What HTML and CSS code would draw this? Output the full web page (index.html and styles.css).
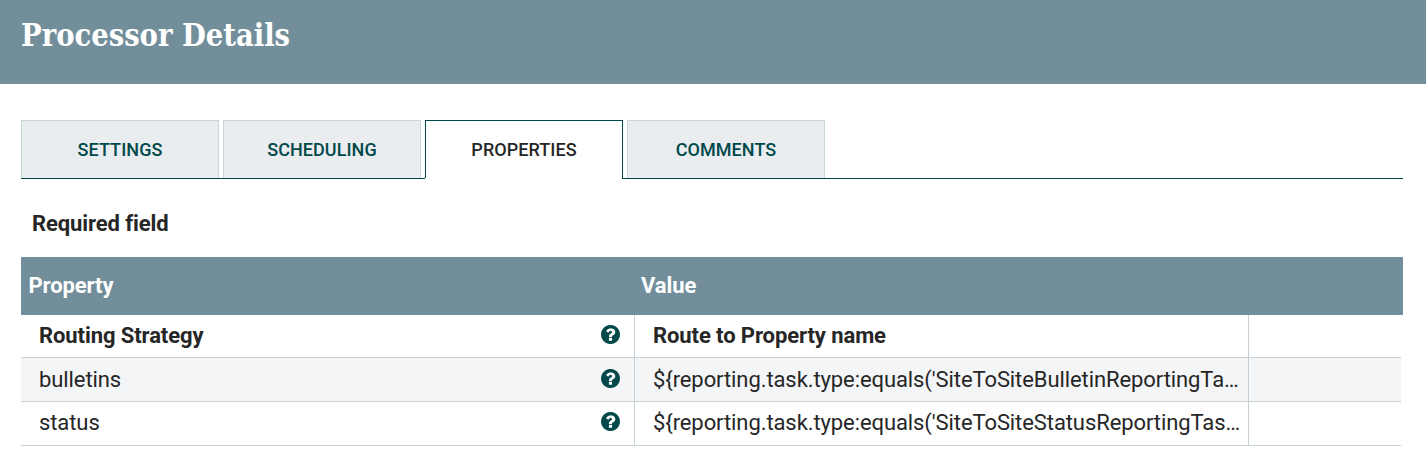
FILE: index.html
```html
<!DOCTYPE html>
<html lang="en">
<head>
<meta charset="utf-8">
<title>Processor Details</title>
<link rel="stylesheet" href="styles.css">
</head>
<body>
<svg width="0" height="0" class="defs" aria-hidden="true">
  <symbol id="help" viewBox="0 0 1536 1536">
    <path d="M896 1248v-192q0-14-9-23t-23-9h-192q-14 0-23 9t-9 23v192q0 14 9 23t23 9h192q14 0 23-9t9-23zm256-672q0-88-55.500-163t-138.500-116-170-41q-243 0-371 213-15 24 8 42l132 100q7 6 19 6 16 0 25-12 53-68 86-92 34-24 86-24 48 0 85.500 26t37.500 59q0 38-20 61t-68 45q-63 28-115.500 86.500t-52.500 125.500v36q0 14 9 23t23 9h192q14 0 23-9t9-23q0-19 21.500-49.500t54.500-49.500q32-18 49-28.500t46-35 44.500-48 28-60.500 12.500-81zm384 192q0 209-103 385.500t-279.500 279.500-385.500 103-385.500-103-279.500-279.500-103-385.500 103-385.500 279.500-279.500 385.500-103 385.500 103 279.500 279.500 103 385.500z"/>
  </symbol>
</svg>
<header class="dialog-header"><h1 class="title">Processor Details</h1></header>
<main class="content">
  <nav class="tabs">
    <div class="tab">SETTINGS</div>
    <div class="tab">SCHEDULING</div>
    <div class="tab active">PROPERTIES</div>
    <div class="tab">COMMENTS</div>
  </nav>
  <div class="required">Required field</div>
  <section class="table">
    <div class="head"><div class="head-cell">Property</div><div class="head-cell second">Value</div></div>
    <div class="row first">
      <div class="cell name"><span>Routing Strategy</span><svg class="help"><use href="#help"/></svg></div>
      <div class="cell value"><span class="text">Route to Property name</span></div>
      <div></div>
    </div>
    <div class="row alt">
      <div class="cell name"><span>bulletins</span><svg class="help"><use href="#help"/></svg></div>
      <div class="cell value"><span class="text">${reporting.task.type:equals('SiteToSiteBulletinReportingTa…</span></div>
      <div></div>
    </div>
    <div class="row last">
      <div class="cell name"><span>status</span><svg class="help"><use href="#help"/></svg></div>
      <div class="cell value"><span class="text">${reporting.task.type:equals('SiteToSiteStatusReportingTas…</span></div>
      <div></div>
    </div>
  </section>
</main>
</body>
</html>
```
FILE: styles.css
```css
* { box-sizing: border-box; }
body {
  margin: 0;
  background: #fff;
  color: #262626;
  font-family: Roboto, "Liberation Sans", sans-serif;
  font-size: 22px;
}
.defs { display: block; }
.dialog-header {
  height: 84px;
  padding: 15px 21px 0;
  background: #728e9b;
}
.title {
  width: max-content;
  margin: 0;
  color: #fff;
  font: bold 31px/40px "Roboto Slab", "DejaVu Serif Condensed", "DejaVu Serif", serif;
  font-stretch: condensed;
  transform: scaleX(0.985);
  transform-origin: left;
}
.content { padding: 36px 23px 0 21px; }
.tabs {
  display: flex;
  gap: 4px;
  height: 59px;
  border-bottom: 1px solid #004849;
}
.tab {
  width: 198px;
  height: 58px;
  border: 1px solid #c7d6d8;
  border-bottom: 0;
  background: #e9edf0;
  color: #004849;
  font-size: 18px;
  font-weight: 500;
  letter-spacing: 0.06px;
  line-height: 57px;
  text-align: center;
}
.tab.active {
  position: relative;
  border-color: #004849;
  background: #fff;
  color: #262626;
}
.tab.active::after {
  content: "";
  position: absolute;
  left: -1px;
  right: 0;
  bottom: -1px;
  height: 1px;
  background: #fff;
}
.required {
  padding: 31px 0 0 11px;
  height: 78px;
  font-weight: 700;
  letter-spacing: -0.1px;
  line-height: 28px;
}
.head, .row { display: grid; grid-template-columns: 614px 614px 1fr; }
.head {
  height: 58px;
  background: #728e9b;
  color: #fff;
  font-weight: 700;
  letter-spacing: -0.1px;
  line-height: 57px;
}
.head-cell { padding-left: 7.5px; }
.head-cell.second { padding-left: 6px; }
.row {
  height: 44px;
  margin-right: 2px;
  border-bottom: 1px solid #c7d2d7;
  letter-spacing: -0.09px;
  line-height: 43px;
}
.row.first { height: 43px; font-weight: 700; line-height: 42px; }
.row.last { line-height: 42px; }
.row.alt { background: #f4f5f7; }
.cell { border-right: 1px solid #c7d2d7; padding-left: 18px; white-space: nowrap; }
.name { display: flex; justify-content: space-between; padding-right: 14.500px; }
.help { width: 19px; height: 19px; margin-top: 10px; fill: #004849; }
.alt .help { margin-top: 11px; }
```
